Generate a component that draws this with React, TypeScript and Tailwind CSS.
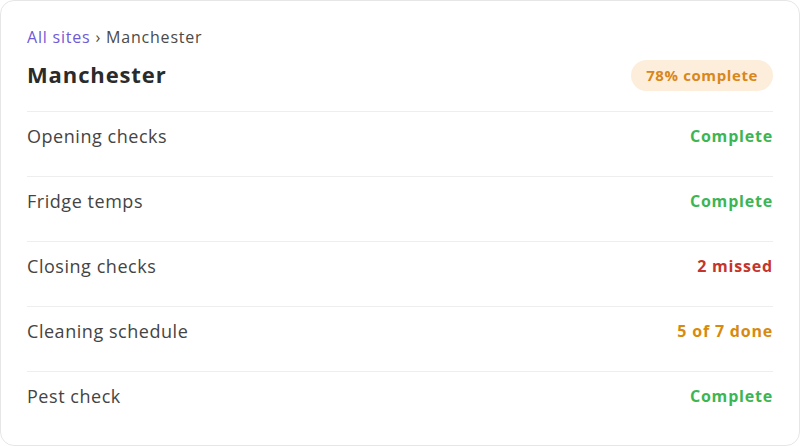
const rows = [
  { label: "Opening checks", status: "Complete", tone: "text-[#3db553]" },
  { label: "Fridge temps", status: "Complete", tone: "text-[#3db553]" },
  { label: "Closing checks", status: "2 missed", tone: "text-[#c4352b]" },
  { label: "Cleaning schedule", status: "5 of 7 done", tone: "text-[#d88a0c]" },
  { label: "Pest check", status: "Complete", tone: "text-[#3db553]" },
];

const App = () => {
  return (
    <div className="w-[800px] h-[446px] bg-white font-['Open_Sans',sans-serif]">
      <div className="h-[446px] rounded-[14px] border border-[#e6e6e6] px-[26px] pt-[25px]">
        <div className="text-[16px] leading-[22px] text-[#4a4a4a] tracking-[0.05em]">
          <span className="text-[#6e5ad6]">All sites</span> › Manchester
        </div>
        <div className="mt-[11px] flex items-start justify-between pb-[20px] border-b border-[#eeeeee]">
          <h1 className="text-[22px] leading-[30px] font-bold text-[#2b2b2b] tracking-[0.04em]">Manchester</h1>
          <span className="mt-[1px] h-[31px] flex items-center px-[15px] rounded-full bg-[#fdeedb] text-[#d9861a] text-[15px] font-bold tracking-[0.04em]">
            78% complete
          </span>
        </div>
        {rows.map((row, i) => (
          <div
            key={row.label}
            className={`flex items-start justify-between h-[65px] pt-[12px] ${i < rows.length - 1 ? "border-b border-[#eeeeee]" : ""}`}
          >
            <span className="text-[18px] leading-[24px] text-[#444444] tracking-[0.03em]">{row.label}</span>
            <span className={`text-[16px] leading-[24px] font-bold tracking-[0.05em] ${row.tone}`}>{row.status}</span>
          </div>
        ))}
      </div>
    </div>
  );
};

export default App;
